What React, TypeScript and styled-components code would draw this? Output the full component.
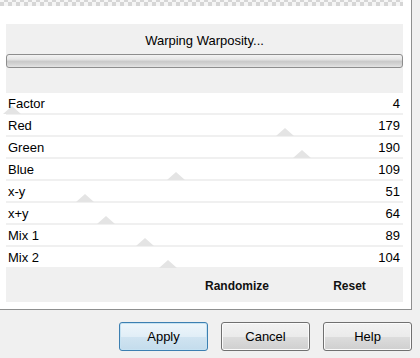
import React from "react";
import styled, { createGlobalStyle } from "styled-components";

const Global = createGlobalStyle`
  html, body { margin: 0; padding: 0; }
  body { background: #f0f0f0; font-family: "Liberation Sans", Arial, sans-serif; }
`;

const Page = styled.div`
  width: 420px;
  height: 358px;
  background: #f0f0f0;
  overflow: hidden;
  display: flex;
  flex-direction: column;
`;

const Frame = styled.div`
  width: 412px;
  height: 310px;
  box-sizing: border-box;
  background: #ffffff;
  border-right: 1px solid #8e8f8f;
  border-bottom: 1px solid #8e8f8f;
  display: flex;
  flex-direction: column;
`;

const Checker = styled.div`
  width: 403px;
  height: 6px;
  background-color: #f6f6f6;
  background-image: conic-gradient(#d6d6d6 25%, transparent 0 50%, #d6d6d6 0 75%, transparent 0);
  background-size: 8px 8px;
  background-position: 0 -2px;
`;

const Panel = styled.div`
  margin: 18px 0 0 6px;
  width: 397px;
  height: 278px;
  background: #f0f0f0;
  display: flex;
  flex-direction: column;
`;

const Title = styled.div`
  height: 30px;
  display: flex;
  align-items: center;
  justify-content: center;
  font-size: 13px;
  color: #000;
  padding-top: 2px;
  box-sizing: border-box;
`;

const Progress = styled.div`
  height: 14px;
  box-sizing: border-box;
  border: 1px solid #8d8d8d;
  border-radius: 3px;
  background: linear-gradient(#f3f3f3 0%, #e6e6e6 35%, #c9c9c9 55%, #d6d6d6 80%, #e4e4e4 100%);
`;

const Spacer = styled.div<{ $h: number }>`
  height: ${(p) => p.$h}px;
`;

const Rows = styled.div`
  display: flex;
  flex-direction: column;
  gap: 2px;
`;

const Row = styled.div`
  position: relative;
  height: 20px;
  background: #ffffff;
  display: flex;
  align-items: center;
  justify-content: space-between;
  padding: 0 3px 0 2px;
  font-size: 13px;
  color: #000;
`;

const Label = styled.span`
  position: relative;
  z-index: 1;
`;

const Value = styled.span`
  position: relative;
  z-index: 1;
`;

const Thumb = styled.span`
  position: absolute;
  bottom: -1px;
  width: 0;
  height: 0;
  margin-left: -9px;
  border-left: 9px solid transparent;
  border-right: 9px solid transparent;
  border-bottom: 8px solid #e4e4e4;
`;

const Actions = styled.div`
  flex: 1;
  display: grid;
  grid-template-columns: 172px 118px 1fr;
  align-items: center;
  font-size: 12px;
  font-weight: bold;
  color: #111;
`;

const ActionText = styled.span`
  text-align: center;
  padding-top: 2px;
`;

const Footer = styled.div`
  flex: 1;
  display: flex;
  justify-content: flex-end;
  align-items: flex-start;
  gap: 13px;
  padding: 12px 8px 0 0;
`;

const Button = styled.button<{ $primary?: boolean }>`
  width: 89px;
  height: 29px;
  box-sizing: border-box;
  border-radius: 3px;
  font-family: "Liberation Sans", Arial, sans-serif;
  font-size: 13px;
  color: #000;
  padding: 0;
  border: 1px solid ${(p) => (p.$primary ? "#3c7fb1" : "#707070")};
  box-shadow: inset 0 0 0 1px ${(p) => (p.$primary ? "#c6e2f2" : "#fbfbfb")};
  background: ${(p) =>
    p.$primary
      ? "linear-gradient(#eef6fb 0%, #e1eef7 50%, #d0e4f1 50%, #c4dcec 100%)"
      : "linear-gradient(#f2f2f2 0%, #ebebeb 50%, #dddddd 50%, #cfcfcf 100%)"};
`;

const params = [
  { name: "Factor", value: 4 },
  { name: "Red", value: 179 },
  { name: "Green", value: 190 },
  { name: "Blue", value: 109 },
  { name: "x-y", value: 51 },
  { name: "x+y", value: 64 },
  { name: "Mix 1", value: 89 },
  { name: "Mix 2", value: 104 },
];

export default function App() {
  return (
    <Page>
      <Global />
      <Frame>
        <Checker />
        <Panel>
          <Title>Warping Warposity...</Title>
          <Progress />
          <Spacer $h={25} />
          <Rows>
            {params.map((p) => (
              <Row key={p.name}>
                <Thumb style={{ left: `${(p.value / 255) * 397}px` }} />
                <Label>{p.name}</Label>
                <Value>{p.value}</Value>
              </Row>
            ))}
          </Rows>
          <Actions>
            <span />
            <ActionText>Randomize</ActionText>
            <ActionText>Reset</ActionText>
          </Actions>
        </Panel>
      </Frame>
      <Footer>
        <Button $primary>Apply</Button>
        <Button>Cancel</Button>
        <Button>Help</Button>
      </Footer>
    </Page>
  );
}
